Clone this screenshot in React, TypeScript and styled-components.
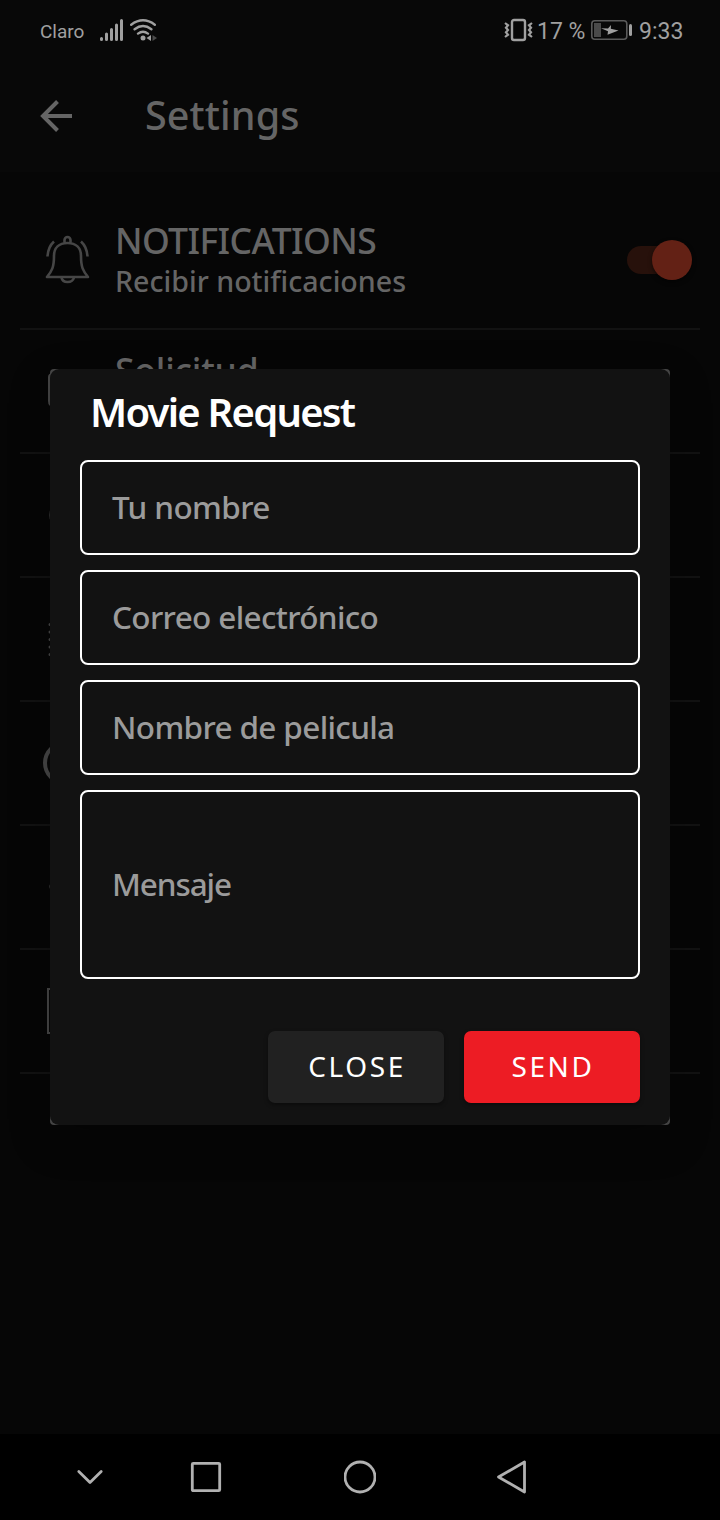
import React from "react";
import styled, { createGlobalStyle } from "styled-components";

const GlobalStyle = createGlobalStyle`
  * { box-sizing: border-box; }
  body { margin: 0; background: #060606; }
`;

const Screen = styled.div`
  position: relative;
  width: 720px;
  height: 1520px;
  display: flex;
  flex-direction: column;
  overflow: hidden;
  background: #060606;
  font-family: "Noto Sans", "Open Sans", sans-serif;
`;

const StatusBar = styled.header`
  height: 60px;
  flex: none;
  display: flex;
  align-items: center;
  padding: 0 36px 0 40px;
  background: #080808;
  color: #a0a0a0;
`;

const StatusText = styled.span<{ $size: number; $width: number; $spacing?: number }>`
  width: ${(p) => p.$width}px;
  font-family: Roboto, sans-serif;
  font-size: ${(p) => p.$size}px;
  line-height: 30px;
  padding-top: 3px;
  letter-spacing: ${(p) => p.$spacing ?? 0}px;
  white-space: nowrap;
`;

const StatusIcon = styled.svg<{ $gap: number }>`
  display: block;
  flex: none;
  margin-right: ${(p) => p.$gap}px;
`;

const Spacer = styled.div`
  flex: 1;
`;

const AppBar = styled.div`
  height: 112px;
  flex: none;
  display: flex;
  align-items: center;
  padding-left: 36px;
  gap: 69px;
  background: #080808;
`;

const AppTitle = styled.h1`
  margin: 0 0 2px;
  font-size: 39.5px;
  line-height: 52px;
  font-weight: 500;
  letter-spacing: 0.1px;
  color: #656565;
`;

const List = styled.main`
  flex: 1;
  display: flex;
  flex-direction: column;
  padding: 34px 20px 0;
`;

const Row = styled.div`
  height: 124px;
  display: flex;
  border-bottom: 2px solid #121212;
`;

const RowIcon = styled.svg`
  width: 60px;
  height: 60px;
  flex: none;
  margin: 24px 15px 0 20px;
  fill: none;
  stroke: #464646;
`;

const RowText = styled.div<{ $top: number }>`
  flex: 1;
  padding-top: ${(p) => p.$top}px;
  color: #656565;
  white-space: nowrap;
`;

const RowTitle = styled.div<{ $spacing: number }>`
  font-size: 35.5px;
  line-height: 42px;
  font-weight: 500;
  letter-spacing: ${(p) => p.$spacing}px;
`;

const RowSubtitle = styled.div`
  font-size: 28.6px;
  line-height: 38px;
  margin-top: 1px;
  font-weight: 500;
`;

const Switch = styled.div`
  flex: none;
  width: 58px;
  height: 28px;
  margin: 40px 15px 0 0;
  border-radius: 14px;
  background: #27110b;
  display: flex;
  align-items: center;
  padding-left: 25px;
`;

const Thumb = styled.div`
  flex: none;
  width: 40px;
  height: 40px;
  border-radius: 50%;
  background: #632115;
  box-shadow: 0 2px 4px rgba(0, 0, 0, 0.5);
`;

const NavBar = styled.nav`
  height: 86px;
  flex: none;
  display: grid;
  grid-template-columns: 116px 154px 152px 1fr;
  align-items: center;
  padding-left: 74px;
  background: #000;
`;

const NavIcon = styled.svg`
  display: block;
  width: 32px;
  height: 36px;
  fill: none;
  stroke: #b1b1b1;
  stroke-width: 2.8;
  stroke-linecap: round;
  stroke-linejoin: round;
`;

const DialogFrame = styled.div`
  position: absolute;
  left: 50px;
  top: 369px;
  width: 620px;
  height: 756px;
  border-radius: 4px;
  background: #444;
  box-shadow: 0 14px 40px rgba(0, 0, 0, 0.25);
`;

const Dialog = styled.section`
  height: 100%;
  display: flex;
  flex-direction: column;
  padding: 16px 30px 22px;
  border-radius: 9px;
  background: #121212;
`;

const DialogTitle = styled.h2`
  margin: 0 0 21px 10px;
  font-size: 40px;
  line-height: 54px;
  font-weight: 600;
  letter-spacing: -1.75px;
  color: #fff;
  white-space: nowrap;
`;

const Fields = styled.div`
  display: flex;
  flex-direction: column;
  gap: 15px;
`;

const Field = styled.div<{ $height?: number; $spacing: number }>`
  height: ${(p) => p.$height ?? 95}px;
  display: flex;
  align-items: center;
  padding: 0 30px 2px;
  border: 2px solid #fff;
  border-radius: 8px;
  font-size: 31.5px;
  line-height: 44px;
  font-weight: 500;
  letter-spacing: ${(p) => p.$spacing}px;
  color: #9b9b9b;
`;

const Actions = styled.div`
  margin-top: auto;
  display: flex;
  justify-content: flex-end;
  gap: 20px;
`;

const ActionButton = styled.button<{ $primary?: boolean }>`
  width: 176px;
  height: 72px;
  border: 0;
  border-radius: 7px;
  padding: 0 0 3px 2px;
  background: ${(p) => (p.$primary ? "#ed1c24" : "#212121")};
  color: #fff;
  font-family: inherit;
  font-size: 28px;
  font-weight: 450;
  letter-spacing: 2.6px;
  box-shadow: 0 2px 4px rgba(0, 0, 0, 0.4);
`;

const hiddenRows = [
  <path key="a" d="M13.5 20q-4.500 0-4.500 3v24q0 5 5 5h30" strokeWidth="2" />,
  <circle key="b" cx="29" cy="37" r="19" strokeWidth="1.2" />,
  <path key="c" d="M10 22.500v32" strokeWidth="3" strokeLinecap="round" strokeDasharray="0 7.5" />,
  <circle key="d" cx="25" cy="37" r="20" strokeWidth="4" />,
  <circle key="e" cx="13" cy="36.500" r="3" strokeWidth="1.2" />,
  <rect key="f" x="8" y="15" width="34" height="44" strokeWidth="2" />,
];

export default function App() {
  return (
    <Screen>
      <GlobalStyle />
      <StatusBar>
        <StatusText $size={19} $width={60}>Claro</StatusText>
        <StatusIcon $gap={7} width="23" height="24" viewBox="0 0 23 24" stroke="#a0a0a0" strokeWidth="3" strokeLinecap="round">
          <path d="M1.500 20.500v1M6.500 16v5.500M11.500 11.500v10M16.500 7v14.500M21.500 2.500v19" />
        </StatusIcon>
        <StatusIcon $gap={0} width="27" height="24" viewBox="0 0 27 24" fill="none" stroke="#a0a0a0" strokeWidth="2.400" strokeLinecap="round">
          <path d="M1.200 6.700Q13 -2 24.800 6.700M4.600 11.200Q13 5 21.400 11.200M8 15.600Q13 12 18 15.600" />
          <circle cx="13" cy="20" r="2.500" fill="#a0a0a0" stroke="none" />
          <path d="M21 17v6l-4.500-3z" fill="#a0a0a0" stroke="none" />
          <path d="M22.500 17v6l4.500-3z" fill="#4b4b4b" stroke="none" />
        </StatusIcon>
        <Spacer />
        <StatusIcon $gap={4} width="29" height="24" viewBox="0 0 29 24" fill="none" stroke="#a0a0a0">
          <rect x="8" y="2" width="13" height="20" rx="2" strokeWidth="2.400" />
          <path d="M1 5l3 2.300-2 2.400 2 2.300-2 2.300 2 2.400-3 2.300M28 5l-3 2.300 2 2.400-2 2.300 2 2.300-2 2.400 3 2.300" strokeWidth="2.200" />
        </StatusIcon>
        <StatusText $size={23} $width={53}>17 %</StatusText>
        <StatusIcon $gap={7} width="42" height="22" viewBox="0 0 42 22" fill="none">
          <rect x="1.800" y="1.800" width="35" height="18.400" rx="3" stroke="#5a5a5a" strokeWidth="1.600" />
          <rect x="4" y="4" width="7" height="14" fill="#4a4a4a" />
          <path d="M11 9.300L18 9.500 21 6 20.800 9.800 28.500 11.500 17.500 15.800 18 12.300z" fill="#a0a0a0" />
          <rect x="39" y="5" width="3" height="12" rx="1.500" fill="#a0a0a0" />
        </StatusIcon>
        <StatusText $size={23} $width={45}>9:33</StatusText>
      </StatusBar>

      <AppBar>
        <svg width="40" height="40" viewBox="0 0 40 40" fill="none" stroke="#656565" strokeWidth="4">
          <path d="M36 20H7M21.500 5.500L7 20l14.500 14.500" />
        </svg>
        <AppTitle>Settings</AppTitle>
      </AppBar>

      <List>
        <Row>
          <RowIcon viewBox="0 0 60 60" strokeWidth="2.600">
            <path d="M7 47h41c-5-6-7-10-7-21 0-8-5-13-13.500-13S14 18 14 26c0 11-2 15-7 21z" strokeLinejoin="round" />
            <path d="M24.500 12.500V10a3 3 0 0 1 6 0v2.500M21.500 47.500c1 6 11 6 12.500 0M14 11.500Q8 17 7.500 26.500M41 11.500Q47 17 47.500 26.500" />
          </RowIcon>
          <RowText $top={13}>
            <RowTitle $spacing={-0.6}>NOTIFICATIONS</RowTitle>
            <RowSubtitle>Recibir notificaciones</RowSubtitle>
          </RowText>
          <Switch><Thumb /></Switch>
        </Row>
        {hiddenRows.map((icon, i) => (
          <Row key={i}>
            <RowIcon viewBox="0 0 60 60">{icon}</RowIcon>
            <RowText $top={19}>{i === 0 && <RowTitle $spacing={-0.2}>Solicitud</RowTitle>}</RowText>
          </Row>
        ))}
      </List>

      <NavBar>
        <NavIcon viewBox="0 0 32 36"><path d="M4.800 12.500L16 23.500 27.200 12.500" /></NavIcon>
        <NavIcon viewBox="0 0 32 36"><rect x="2.300" y="4.300" width="27.400" height="27.400" rx="1" /></NavIcon>
        <NavIcon viewBox="0 0 32 36"><circle cx="16" cy="18" r="15" /></NavIcon>
        <NavIcon viewBox="0 0 32 36"><path d="M28.500 3v30L2.500 18z" /></NavIcon>
      </NavBar>

      <DialogFrame>
        <Dialog>
          <DialogTitle>Movie Request</DialogTitle>
          <Fields>
            <Field $spacing={-0.6}>Tu nombre</Field>
            <Field $spacing={-0.65}>Correo electrónico</Field>
            <Field $spacing={-0.65}>Nombre de pelicula</Field>
            <Field $spacing={-1.1} $height={189}>Mensaje</Field>
          </Fields>
          <Actions>
            <ActionButton>CLOSE</ActionButton>
            <ActionButton $primary>SEND</ActionButton>
          </Actions>
        </Dialog>
      </DialogFrame>
    </Screen>
  );
}
